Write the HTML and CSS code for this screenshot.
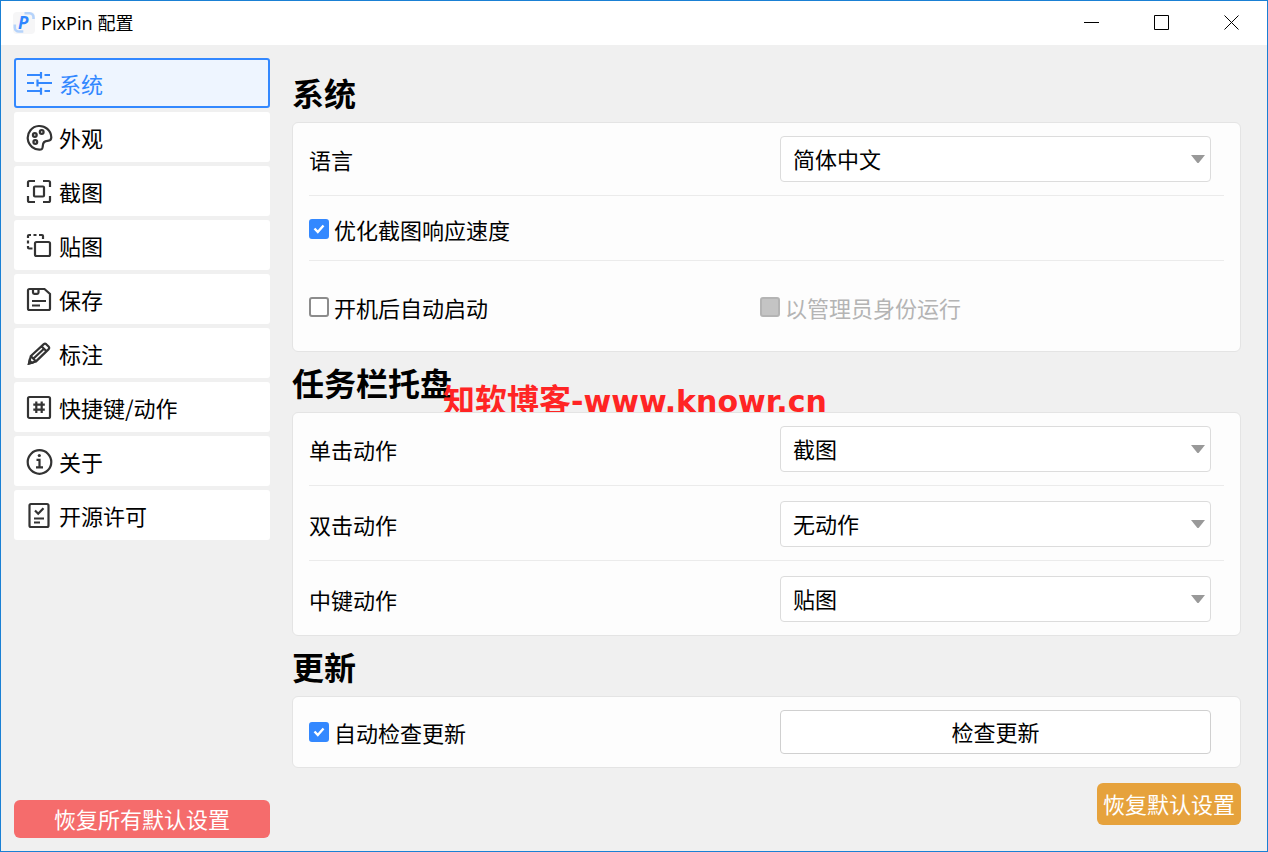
FILE: index.html
```html
<!DOCTYPE html>
<html lang="zh-CN">
<head>
<meta charset="utf-8">
<meta name="viewport" content="width=device-width, initial-scale=1">
<title>PixPin 配置</title>
<link rel="stylesheet" href="styles.css">
</head>
<body>
<div class="window">
  <header class="titlebar">
    <svg class="logo" viewBox="0 0 24 24" aria-hidden="true">
      <rect x="1" y="1" width="22" height="22" rx="4" fill="#f6f6f7"/>
      <path d="M12.5 2.200H17.500a4 4 0 0 1 4 4V8" fill="none" stroke="#b5d3fb" stroke-width="2.600"/>
      <path d="M2.800 13.500v3a4 4 0 0 0 4 4h4.500" fill="none" stroke="#b5d3fb" stroke-width="2.600"/>
      <text class="logo-letter" x="6" y="18">P</text>
    </svg>
    <h1 class="window-title">PixPin 配置</h1>
    <div class="window-controls">
      <button class="control" type="button" aria-label="最小化"><svg viewBox="0 0 16 16"><path d="M0 7.500h15"/></svg></button>
      <button class="control" type="button" aria-label="最大化"><svg viewBox="0 0 16 16"><path d="M.5.5h14v14H.5z"/></svg></button>
      <button class="control" type="button" aria-label="关闭"><svg viewBox="0 0 16 16"><path d="M.5.5l14 14M14.500.5l-14 14"/></svg></button>
    </div>
  </header>

  <div class="body">
    <aside class="sidebar">
      <nav class="nav">
        <a class="nav-item active" href="#system" aria-current="page">
          <svg viewBox="0 0 28 28"><path d="M1 6h13M15 3v6.500M18.500 6H24M1 14h7M11.500 10.500v7M11.500 14H26M1 22h13M15 18.800v7M18.500 22H24"/></svg>
          <span>系统</span></a>
        <a class="nav-item" href="#appearance">
          <svg viewBox="0 0 28 28"><path d="M15 26.500A11.800 11.800 0 1 1 25.300 14.200C25.400 16.800 24 17.600 21.500 17.900 18.500 18.200 17 19.500 16.900 22.200 16.800 24.200 16.500 26.200 15 26.500Z"/><circle cx="15.700" cy="9" r="1.900"/><circle cx="8.800" cy="12" r="1.900"/><circle cx="9.300" cy="19" r="1.900"/></svg>
          <span>外观</span></a>
        <a class="nav-item" href="#capture">
          <svg viewBox="0 0 28 28"><path d="M2 10V5.500Q2 4 3.500 4H9M17 4h5.500Q24 4 24 5.500V10M24 19v4.500Q24 25 22.500 25H17M9 25H3.500Q2 25 2 23.500V19"/><rect x="8" y="9.500" width="10" height="10" rx="1"/></svg>
          <span>截图</span></a>
        <a class="nav-item" href="#pin">
          <svg viewBox="0 0 28 28"><path d="M2 7V4.800Q2 4 3 4H5M7.500 4h3M13 4h3q1 0 1 1V8M2 9.500v3M2 15v1.500Q2 17.500 3 17.500H6.500"/><rect x="9" y="11" width="15" height="14" rx="1.500"/></svg>
          <span>贴图</span></a>
        <a class="nav-item" href="#save">
          <svg viewBox="0 0 28 28"><path d="M3.500 4H18.500L24 9V23.500Q24 25 22.500 25H3.500Q2 25 2 23.500V5.500Q2 4 3.500 4ZM7 4V7.500Q7 8.800 8.300 8.800H11.200Q12.500 8.800 12.500 7.500V4M6 16H20M6 20.500h8"/></svg>
          <span>保存</span></a>
        <a class="nav-item" href="#annotate">
          <svg viewBox="0 0 28 28"><path d="M3 24.500L4.800 17 17.800 5.200Q19 4.200 20.200 5.200L22.800 7.800Q23.800 9 22.700 10.100L10 22.400ZM4.800 17L10 22.400M15.500 7.300L20.500 12.200M7.500 19.500L18 9.800"/><path d="M3 24.500l.6-3 2.200 2.300z" fill="currentColor"/></svg>
          <span>标注</span></a>
        <a class="nav-item" href="#hotkeys">
          <svg viewBox="0 0 28 28"><rect x="2" y="4" width="22" height="21" rx="1.500"/><path d="M10.300 8.500v11.500M15.700 8.500v11.500M7.300 11.700h11.500M7.300 16.700h11.500"/></svg>
          <span>快捷键/动作</span></a>
        <a class="nav-item" href="#about">
          <svg viewBox="0 0 28 28"><circle cx="13.500" cy="15" r="11.800"/><path d="M10.500 12.800h3v7.500M10 20.300h7"/><circle class="dot" cx="13.300" cy="8.500" r="1.600"/></svg>
          <span>关于</span></a>
        <a class="nav-item" href="#license">
          <svg viewBox="0 0 28 28"><rect x="3.500" y="3" width="19" height="23" rx="1.500"/><path d="M9 9.500l3.200 3.200L17.500 7.200M8 17.500h10M8 21.500h6"/></svg>
          <span>开源许可</span></a>
      </nav>
      <button class="btn btn-danger" type="button">恢复所有默认设置</button>
    </aside>

    <main class="content">
      <section>
        <h2 class="section-title" id="system">系统</h2>
        <div class="card">
          <div class="row">
            <label for="language">语言</label>
            <div class="field"><select class="select" id="language"><option>简体中文</option></select></div>
          </div>
          <div class="row row-check">
            <label class="check"><input type="checkbox" checked><span>优化截图响应速度</span></label>
          </div>
          <div class="row row-tall">
            <label class="check"><input type="checkbox"><span>开机后自动启动</span></label>
            <label class="check disabled"><input type="checkbox" disabled><span>以管理员身份运行</span></label>
          </div>
        </div>
      </section>

      <section class="tray">
        <h2 class="section-title">任务栏托盘</h2>
        <span class="watermark">知软博客<span class="watermark-url">-www.knowr.cn</span></span>
        <div class="card">
          <div class="row">
            <label for="click">单击动作</label>
            <div class="field"><select class="select" id="click"><option>截图</option></select></div>
          </div>
          <div class="row">
            <label for="double-click">双击动作</label>
            <div class="field"><select class="select" id="double-click"><option>无动作</option></select></div>
          </div>
          <div class="row">
            <label for="middle-click">中键动作</label>
            <div class="field"><select class="select" id="middle-click"><option>贴图</option></select></div>
          </div>
        </div>
      </section>

      <section>
        <h2 class="section-title">更新</h2>
        <div class="card">
          <div class="row">
            <label class="check"><input type="checkbox" checked><span>自动检查更新</span></label>
            <div class="field"><button class="btn btn-plain" type="button">检查更新</button></div>
          </div>
        </div>
      </section>

      <div class="actions">
        <button class="btn btn-warning" type="button">恢复默认设置</button>
      </div>
    </main>
  </div>
</div>
</body>
</html>
```
FILE: styles.css
```css
* { box-sizing: border-box; }

body {
  margin: 0;
  color: #000;
  background: #f0f0f0;
  font-family: "Noto Sans CJK SC", sans-serif;
  font-size: 22px;
  line-height: 32px;
}

button, select {
  font: inherit;
  color: inherit;
}

.window {
  display: flex;
  flex-direction: column;
  min-height: 100vh;
  border: 1px solid #1a80d4;
}

/* Title bar */
.titlebar {
  display: flex;
  align-items: center;
  gap: 5px;
  height: 44px;
  padding-left: 11px;
  background: #fff;
}

.logo { width: 24px; height: 24px; }

.logo-letter {
  font: italic bold 17px "Noto Sans", sans-serif;
  fill: #2f86ff;
}

.window-title {
  flex: 1;
  margin: 0;
  font-family: "Noto Sans", "Noto Sans CJK SC", sans-serif;
  font-size: 18px;
  font-weight: 400;
  line-height: 24px;
}

.window-controls { display: flex; }

.control {
  display: flex;
  align-items: center;
  justify-content: center;
  width: 70px;
  height: 44px;
  padding: 0;
  border: 0;
  background: none;
}

.control svg {
  width: 16px;
  height: 16px;
  fill: none;
  stroke: #000;
}

/* Layout */
.body {
  flex: 1;
  display: grid;
  grid-template-columns: 256px 1fr;
  gap: 22px;
  padding: 13px 26px 13px 13px;
}

.sidebar {
  display: flex;
  flex-direction: column;
  justify-content: space-between;
  gap: 16px;
}

.nav {
  display: flex;
  flex-direction: column;
  gap: 4px;
}

.nav-item {
  display: flex;
  align-items: center;
  gap: 5px;
  height: 50px;
  padding: 0 10px;
  border: 2px solid #fff;
  border-radius: 3px;
  color: #000;
  background: #fff;
  text-decoration: none;
}

.nav-item svg {
  width: 28px;
  height: 28px;
  color: #333;
  fill: none;
  stroke: currentColor;
  stroke-width: 2.2;
}

.nav-item svg .dot {
  fill: currentColor;
  stroke: none;
}

.nav-item.active {
  color: #3388ff;
  background: #eef5ff;
  border-color: #3388ff;
}

.nav-item.active svg { color: #3388ff; }

.content { padding-top: 4px; }

.section-title {
  margin: 0;
  padding: 4px 0;
  font-size: 32px;
  font-weight: 700;
  line-height: 52px;
}

/* Cards */
.card {
  position: relative;
  padding: 0 16px;
  border: 1px solid #e4e4e4;
  border-radius: 6px;
  background: #fdfdfd;
}

.row {
  display: grid;
  grid-template-columns: 1fr 1fr;
  align-items: center;
  padding: 15px 13px 13px 0;
}

.row:first-child { padding-top: 13px; }

.row + .row { border-top: 1px solid #ebebeb; }

.row-check { padding: 17px 13px 15px 0; }

.row-tall { padding: 30px 13px 28px 0; }

.field { padding-left: 20px; }

.select {
  display: block;
  width: 100%;
  height: 46px;
  padding: 0 32px 2px 12px;
  border: 1px solid #dcdcdc;
  border-radius: 4px;
  appearance: none;
  background: #fff url("data:image/svg+xml,%3Csvg xmlns='http://www.w3.org/2000/svg' width='14' height='8'%3E%3Cpath d='M0 0h14L8 7.500q-1 1-2 0z' fill='%23999'/%3E%3C/svg%3E") no-repeat right 5px center;
}

.check {
  display: flex;
  align-items: center;
  gap: 5px;
}

.check input {
  width: 20px;
  height: 20px;
  margin: 0;
  border: 2px solid #8c8c8c;
  border-radius: 3px;
  appearance: none;
  background: #fff;
}

.check input:checked {
  border-color: #3388ff;
  background: #3388ff url("data:image/svg+xml,%3Csvg xmlns='http://www.w3.org/2000/svg' width='16' height='16'%3E%3Cpath d='M3.500 7.500l3.300 3.500L12.500 4.500' fill='none' stroke='white' stroke-width='2.400'/%3E%3C/svg%3E") no-repeat center;
}

.check.disabled { color: #b4b4b4; }

.check input:disabled {
  border-color: #b4b4b4;
  background: #c4c4c4;
}

/* Buttons */
.btn {
  padding: 0 6px 2px;
  border: 0;
  border-radius: 6px;
  color: #fff;
}

.btn-danger {
  height: 38px;
  background: #f56c6c;
}

.btn-warning {
  height: 42px;
  background: #e6a23c;
}

.btn-plain {
  display: block;
  width: 100%;
  height: 44px;
  border: 1px solid #d0d0d0;
  border-radius: 4px;
  color: #000;
  background: #fff;
}

.actions {
  display: flex;
  justify-content: flex-end;
  padding-top: 15px;
}

/* Overlay text, tucked under the card that follows it */
.tray { position: relative; }

.watermark {
  position: absolute;
  top: 26px;
  left: 151px;
  color: #ff2424;
  font-size: 32px;
  font-weight: 700;
  line-height: 40px;
  white-space: nowrap;
}

.watermark-url {
  font-family: "DejaVu Sans", sans-serif;
  font-size: 30px;
}
```
